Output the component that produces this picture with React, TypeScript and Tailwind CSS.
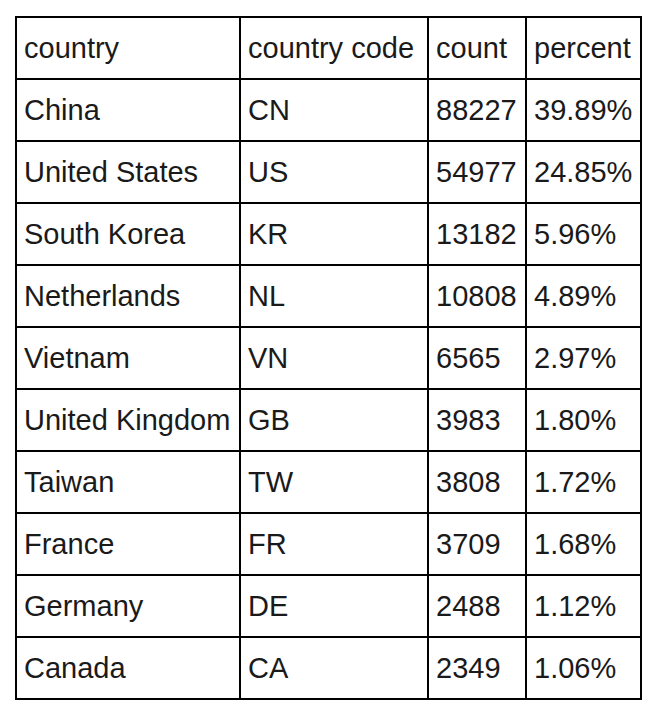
// Country traffic table
const rows: [string, string, string, string][] = [
  ['China', 'CN', '88227', '39.89%'],
  ['United States', 'US', '54977', '24.85%'],
  ['South Korea', 'KR', '13182', '5.96%'],
  ['Netherlands', 'NL', '10808', '4.89%'],
  ['Vietnam', 'VN', '6565', '2.97%'],
  ['United Kingdom', 'GB', '3983', '1.80%'],
  ['Taiwan', 'TW', '3808', '1.72%'],
  ['France', 'FR', '3709', '1.68%'],
  ['Germany', 'DE', '2488', '1.12%'],
  ['Canada', 'CA', '2349', '1.06%'],
];

const headers = ['country', 'country code', 'count', 'percent'];

const cell = 'border-2 border-black h-[62px] pl-[7px] pr-0 pt-[2px] align-middle whitespace-nowrap';

const App = () => {
  return (
    <div className="min-h-[724px] w-[652px] bg-white pt-[16px] pl-[15px] font-['Liberation_Sans',Arial,sans-serif] text-[29px] text-[#1a1a1a]">
      <table className="table-fixed border-collapse">
        <colgroup>
          <col className="w-[224px]" />
          <col className="w-[188px]" />
          <col className="w-[98px]" />
          <col className="w-[115px]" />
        </colgroup>
        <thead>
          <tr>
            {headers.map((h) => (
              <th key={h} className={`${cell} text-left font-normal`}>
                {h}
              </th>
            ))}
          </tr>
        </thead>
        <tbody>
          {rows.map((r) => (
            <tr key={r[0]}>
              {r.map((v, i) => (
                <td key={i} className={cell}>
                  {v}
                </td>
              ))}
            </tr>
          ))}
        </tbody>
      </table>
    </div>
  );
};

export default App;
